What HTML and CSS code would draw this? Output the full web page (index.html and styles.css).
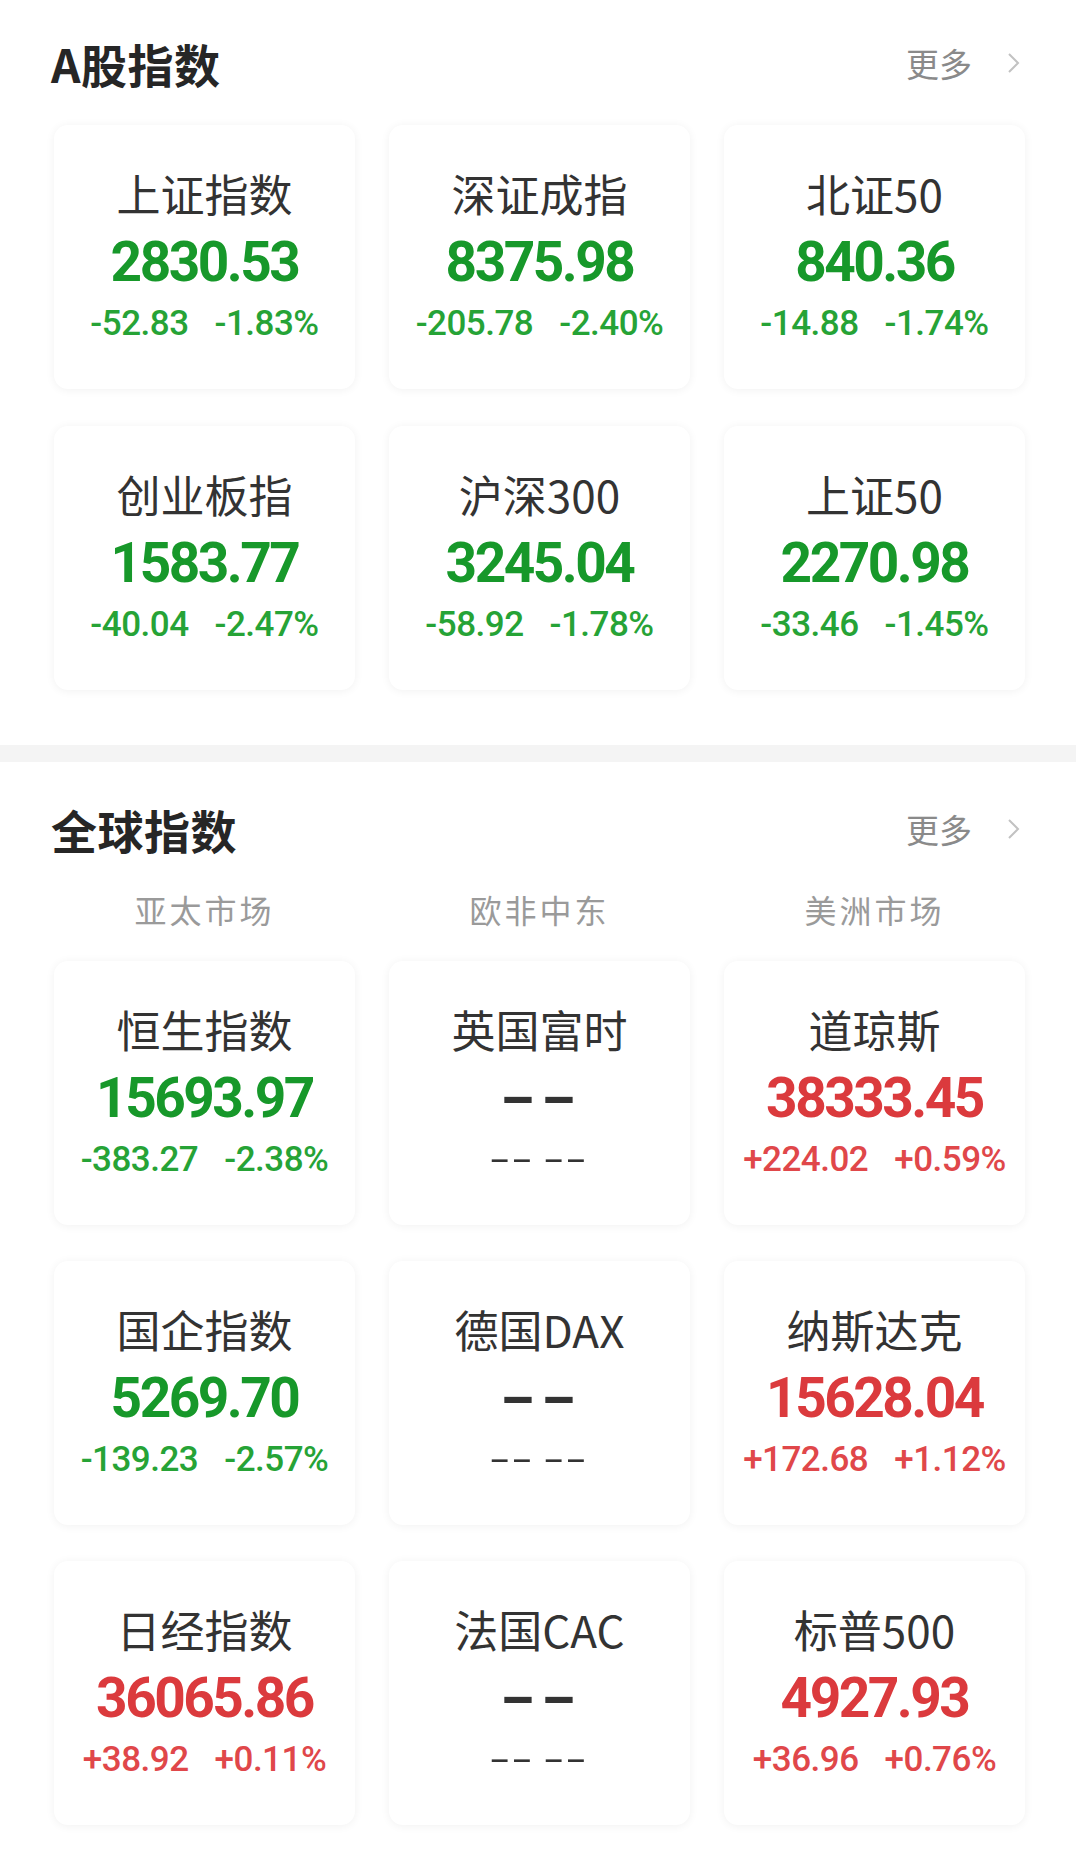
FILE: index.html
```html
<!DOCTYPE html>
<html lang="zh-CN">
<head>
    <meta charset="UTF-8">
    <meta name="viewport" content="width=device-width, initial-scale=1.0">
    <title>指数行情</title>
    <link rel="stylesheet" href="styles.css">
</head>
<body>
    <section class="block">
        <div class="block-head">
            <h2>A股指数</h2>
            <a class="more" href="#">更多
                <svg width="16" height="22" viewBox="0 0 16 22"><path d="M3 2 L12 11 L3 20" fill="none" stroke="#c2c2c2" stroke-width="2"/></svg>
            </a>
        </div>
        <div class="grid">
            <div class="card"><p class="name">上证指数</p><p class="price down">2830.53</p><p class="change down"><span>-52.83</span><span>-1.83%</span></p></div>
            <div class="card"><p class="name">深证成指</p><p class="price down">8375.98</p><p class="change down"><span>-205.78</span><span>-2.40%</span></p></div>
            <div class="card"><p class="name">北证50</p><p class="price down">840.36</p><p class="change down"><span>-14.88</span><span>-1.74%</span></p></div>
            <div class="card"><p class="name">创业板指</p><p class="price down">1583.77</p><p class="change down"><span>-40.04</span><span>-2.47%</span></p></div>
            <div class="card"><p class="name">沪深300</p><p class="price down">3245.04</p><p class="change down"><span>-58.92</span><span>-1.78%</span></p></div>
            <div class="card"><p class="name">上证50</p><p class="price down">2270.98</p><p class="change down"><span>-33.46</span><span>-1.45%</span></p></div>
        </div>
    </section>

    <div class="divider"></div>

    <section class="block global">
        <div class="block-head">
            <h2>全球指数</h2>
            <a class="more" href="#">更多
                <svg width="16" height="22" viewBox="0 0 16 22"><path d="M3 2 L12 11 L3 20" fill="none" stroke="#c2c2c2" stroke-width="2"/></svg>
            </a>
        </div>
        <div class="tabs">
            <span>亚太市场</span>
            <span>欧非中东</span>
            <span>美洲市场</span>
        </div>
        <div class="grid">
            <div class="card"><p class="name">恒生指数</p><p class="price down">15693.97</p><p class="change down"><span>-383.27</span><span>-2.38%</span></p></div>
            <div class="card"><p class="name">英国富时</p><p class="price empty"><span class="dash">--</span></p><p class="change empty"><span class="dash-sm">--</span><span class="dash-sm">--</span></p></div>
            <div class="card"><p class="name">道琼斯</p><p class="price up">38333.45</p><p class="change up"><span>+224.02</span><span>+0.59%</span></p></div>
            <div class="card"><p class="name">国企指数</p><p class="price down">5269.70</p><p class="change down"><span>-139.23</span><span>-2.57%</span></p></div>
            <div class="card"><p class="name">德国DAX</p><p class="price empty"><span class="dash">--</span></p><p class="change empty"><span class="dash-sm">--</span><span class="dash-sm">--</span></p></div>
            <div class="card"><p class="name">纳斯达克</p><p class="price up">15628.04</p><p class="change up"><span>+172.68</span><span>+1.12%</span></p></div>
            <div class="card"><p class="name">日经指数</p><p class="price up">36065.86</p><p class="change up"><span>+38.92</span><span>+0.11%</span></p></div>
            <div class="card"><p class="name">法国CAC</p><p class="price empty"><span class="dash">--</span></p><p class="change empty"><span class="dash-sm">--</span><span class="dash-sm">--</span></p></div>
            <div class="card"><p class="name">标普500</p><p class="price up">4927.93</p><p class="change up"><span>+36.96</span><span>+0.76%</span></p></div>
        </div>
    </section>
</body>
</html>
```

FILE: styles.css
```css
* {
    margin: 0;
    padding: 0;
    box-sizing: border-box;
}

body {
    background: #fff;
    font-family: "Noto Sans CJK SC", "Noto Sans", sans-serif;
    color: #333;
}

.block {
    padding: 35px 50px 55px 54px;
}

.block.global {
    padding-top: 39px;
    padding-bottom: 40px;
}

.block-head {
    display: flex;
    justify-content: space-between;
    align-items: center;
    height: 56px;
}

h2 {
    font-size: 46px;
    font-weight: 700;
    color: #262626;
    line-height: 56px;
    letter-spacing: 0.5px;
    margin-left: -3px;
}

.more {
    display: flex;
    align-items: center;
    gap: 34px;
    font-size: 33px;
    color: #8a8a8a;
    text-decoration: none;
    margin-right: 4px;
}

.grid {
    display: grid;
    grid-template-columns: repeat(3, 301px);
    column-gap: 34px;
    row-gap: 37px;
    margin-top: 34px;
}

.global .grid {
    margin-top: 30px;
    row-gap: 36px;
}

.tabs {
    display: grid;
    grid-template-columns: repeat(3, 301px);
    column-gap: 34px;
    margin-top: 30px;
    text-align: center;
    font-size: 32px;
    line-height: 44px;
    letter-spacing: 3px;
    color: #9a9a9a;
}

.card {
    height: 264px;
    background: #fff;
    border-radius: 14px;
    box-shadow: 0 1px 10px rgba(0, 0, 0, 0.06);
    display: flex;
    flex-direction: column;
    align-items: center;
    padding-top: 43px;
}

.card .name {
    font-size: 44px;
    line-height: 50px;
    color: #333;
}

.card .price {
    margin-top: 12px;
    font-family: Roboto, "Noto Sans", sans-serif;
    font-size: 55px;
    font-weight: 700;
    line-height: 64px;
    letter-spacing: -2.5px;
}

.card .change {
    margin-top: 8px;
    display: flex;
    gap: 26px;
    font-family: Roboto, "Noto Sans", sans-serif;
    font-size: 35px;
    font-weight: 500;
    line-height: 44px;
    letter-spacing: -0.5px;
}

.price.down {
    color: #17982a;
}

.change.down {
    color: #26a336;
}

.price.up {
    color: #db3a3d;
}

.change.up {
    color: #e0474a;
}

.price.empty,
.change.empty {
    color: #333;
}

.dash {
    display: inline-block;
    transform: scaleX(1.8);
    letter-spacing: 1px;
}

.change.empty {
    gap: 30px;
    font-weight: 400;
}

.dash-sm {
    display: inline-block;
    transform: scaleX(1.9);
    letter-spacing: 2px;
}

.divider {
    height: 17px;
    background: #f4f4f4;
}
```
